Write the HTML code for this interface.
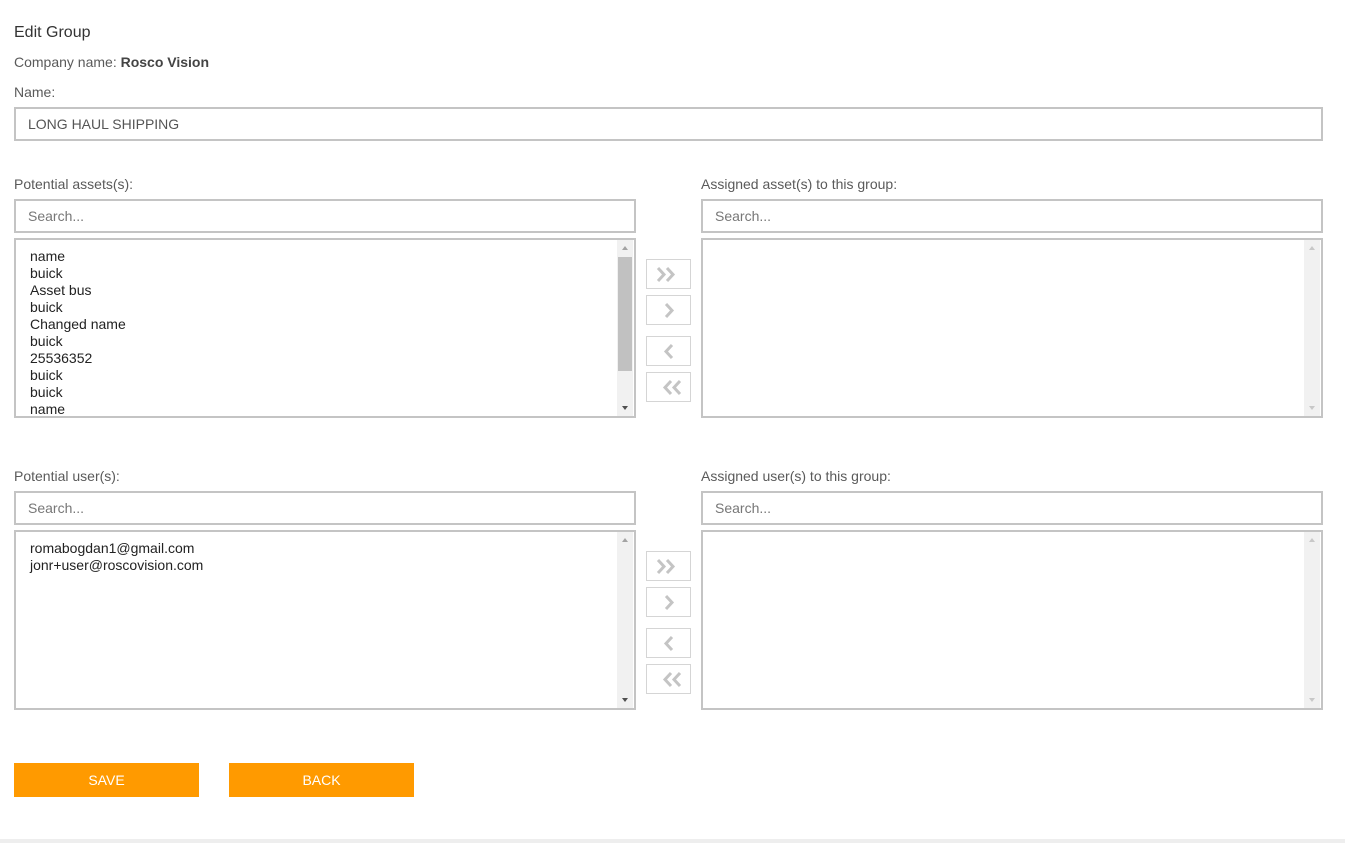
<!DOCTYPE html><html><head><style>
body{margin:0;width:1345px;height:843px;background:#fff;font-family:"Liberation Sans",sans-serif;position:relative;overflow:hidden}
.a{position:absolute}
.t{font-size:14px;color:#5a5a5a}
.box{position:absolute;box-sizing:border-box;border:2px solid #c4c4c4;background:#fff}
.inp{font-size:14px;color:#555;padding:7px 0 0 12px}
.ph{font-size:14px;color:#777;padding:7px 0 0 12px}
.list{font-size:14px;color:#222;line-height:17px;padding:8px 0 0 14px;overflow:hidden}
.sb{position:absolute;right:1px;top:0;bottom:0;width:16px;background:#f1f1f1}
.sb .up,.sb .dn{position:absolute;left:5px;width:0;height:0;border-left:3px solid transparent;border-right:3px solid transparent}
.sb .up{top:6px;border-bottom:4px solid #a3a3a3}
.sb .dn{bottom:6px;border-top:4px solid #505050}
.btn{position:absolute;left:646px;width:45px;height:30px;box-sizing:border-box;border:1px solid #d5d5d5;background:#fff}
.btn svg{position:absolute;left:0;top:0}
.ob{position:absolute;top:763px;width:185px;height:34px;background:#ff9a00;color:#fff;font-size:14px;text-align:center;line-height:34px}
</style></head><body>
<div class="a" style="left:14px;top:24px;font-size:16px;color:#333">Edit Group</div>
<div class="a t" style="left:14px;top:54px">Company name: <b style="color:#444">Rosco Vision</b></div>
<div class="a t" style="left:14px;top:84px">Name:</div>
<div class="box inp" style="left:14px;top:107px;width:1309px;height:34px">LONG HAUL SHIPPING</div>

<div class="a t" style="left:14px;top:176px">Potential assets(s):</div>
<div class="a t" style="left:701px;top:176px">Assigned asset(s) to this group:</div>
<div class="box ph" style="left:14px;top:199px;width:622px;height:34px">Search...</div>
<div class="box ph" style="left:701px;top:199px;width:622px;height:34px">Search...</div>
<div class="box list" style="left:14px;top:238px;width:622px;height:180px">name<br>buick<br>Asset bus<br>buick<br>Changed name<br>buick<br>25536352<br>buick<br>buick<br>name
<div class="sb"><div class="up"></div><div style="position:absolute;left:1px;top:17px;width:14px;height:114px;background:#c1c1c1"></div><div class="dn"></div></div></div>
<div class="box" style="left:701px;top:238px;width:622px;height:180px"><div class="sb"><div class="up" style="border-bottom-color:#c8c8c8"></div><div class="dn" style="border-top-color:#c8c8c8"></div></div></div>

<div class="a t" style="left:14px;top:468px">Potential user(s):</div>
<div class="a t" style="left:701px;top:468px">Assigned user(s) to this group:</div>
<div class="box ph" style="left:14px;top:491px;width:622px;height:34px">Search...</div>
<div class="box ph" style="left:701px;top:491px;width:622px;height:34px">Search...</div>
<div class="box list" style="left:14px;top:530px;width:622px;height:180px">romabogdan1@gmail.com<br>jonr+user@roscovision.com
<div class="sb"><div class="up"></div><div class="dn"></div></div></div>
<div class="box" style="left:701px;top:530px;width:622px;height:180px"><div class="sb"><div class="up" style="border-bottom-color:#c8c8c8"></div><div class="dn" style="border-top-color:#c8c8c8"></div></div></div>

<div class="btn" style="top:259px"><svg width="45" height="30"><path d="M11 8l6 6.5-6 6.5M20 8l6 6.5-6 6.5" stroke="#c4c4c4" stroke-width="3" fill="none"/></svg></div>
<div class="btn" style="top:295px"><svg width="45" height="30"><path d="M19 8l6 6.5-6 6.5" stroke="#c4c4c4" stroke-width="3" fill="none"/></svg></div>
<div class="btn" style="top:336px"><svg width="45" height="30"><path d="M25 8l-6 6.5 6 6.5" stroke="#c4c4c4" stroke-width="3" fill="none"/></svg></div>
<div class="btn" style="top:372px"><svg width="45" height="30"><path d="M24 8l-6 6.5 6 6.5M33 8l-6 6.5 6 6.5" stroke="#c4c4c4" stroke-width="3" fill="none"/></svg></div>
<div class="btn" style="top:551px"><svg width="45" height="30"><path d="M11 8l6 6.5-6 6.5M20 8l6 6.5-6 6.5" stroke="#c4c4c4" stroke-width="3" fill="none"/></svg></div>
<div class="btn" style="top:587px"><svg width="45" height="30"><path d="M19 8l6 6.5-6 6.5" stroke="#c4c4c4" stroke-width="3" fill="none"/></svg></div>
<div class="btn" style="top:628px"><svg width="45" height="30"><path d="M25 8l-6 6.5 6 6.5" stroke="#c4c4c4" stroke-width="3" fill="none"/></svg></div>
<div class="btn" style="top:664px"><svg width="45" height="30"><path d="M24 8l-6 6.5 6 6.5M33 8l-6 6.5 6 6.5" stroke="#c4c4c4" stroke-width="3" fill="none"/></svg></div>

<div class="ob" style="left:14px">SAVE</div>
<div class="ob" style="left:229px">BACK</div>
<div class="a" style="left:0;top:839px;width:1345px;height:4px;background:#eeeeee"></div>
</body></html>
